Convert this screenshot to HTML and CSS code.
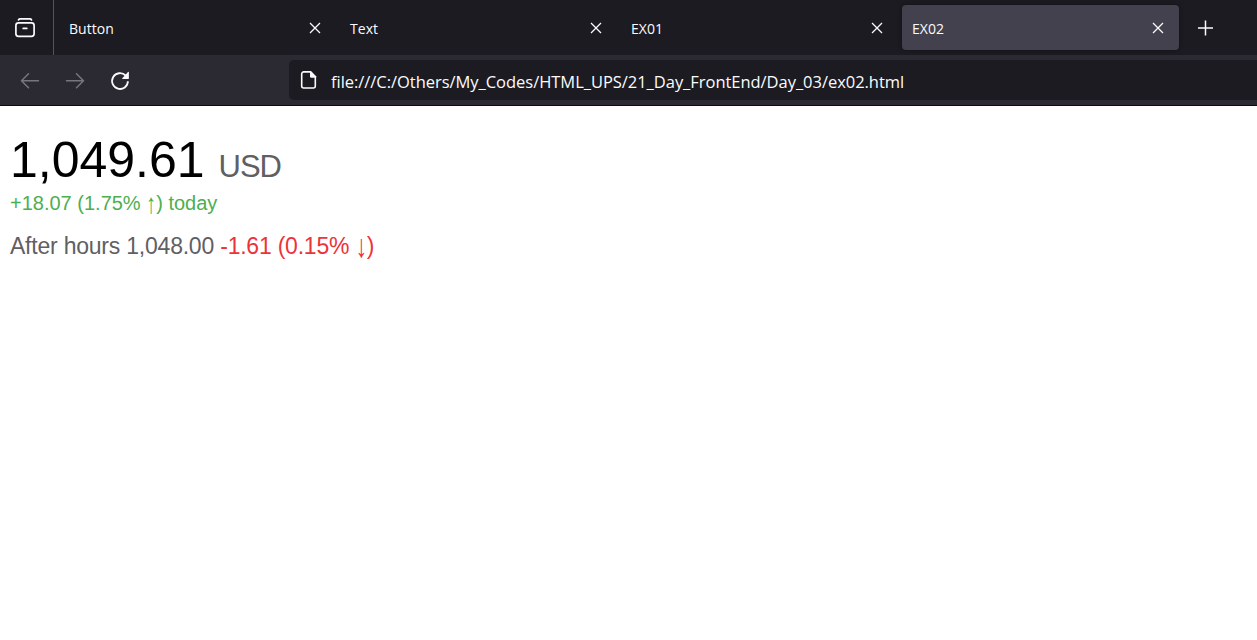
FILE: index.html
```html
<!DOCTYPE html>
<html lang="en">
<head>
<meta charset="utf-8">
<title>EX02</title>
<link rel="stylesheet" href="styles.css">
</head>
<body>
<header class="browser">
  <div class="tabs">
    <div class="archive">
      <svg width="22" height="22" viewBox="0 0 22 22" fill="none" stroke="#fbfbfe" stroke-width="1.7" stroke-linecap="round"><path d="M4.500 2.900Q5 1.900 6.200 1.900H15.800Q17 1.900 17.500 2.900"/><rect x="1.900" y="5.900" width="18.200" height="13.500" rx="2.600"/><path d="M9.200 11.400h3.600"/></svg>
    </div>
    <div class="tab"><span class="label">Button</span><svg class="close" viewBox="0 0 12 12"><path d="M1 1l10 10M11 1L1 11"/></svg></div>
    <div class="tab"><span class="label">Text</span><svg class="close" viewBox="0 0 12 12"><path d="M1 1l10 10M11 1L1 11"/></svg></div>
    <div class="tab"><span class="label">EX01</span><svg class="close" viewBox="0 0 12 12"><path d="M1 1l10 10M11 1L1 11"/></svg></div>
    <div class="tab active"><span class="label">EX02</span><svg class="close" viewBox="0 0 12 12"><path d="M1 1l10 10M11 1L1 11"/></svg></div>
    <svg class="plus" width="16" height="16" viewBox="0 0 16 16"><path d="M8.500 .5v15M1 8h15"/></svg>
  </div>
  <div class="toolbar">
    <div class="nav">
      <svg class="dim" width="20" height="20" viewBox="0 0 20 20"><path d="M18.500 9.700H1.500M8.500 2.700L1.500 9.700l7 7"/></svg>
      <svg class="dim" width="20" height="20" viewBox="0 0 20 20"><path d="M1.500 9.700h17M11.500 2.700l7 7-7 7"/></svg>
      <svg class="reload" width="20" height="20" viewBox="0 0 20 20"><path d="M17.900 10.200A7.900 7.900 0 1 1 15.600 4.500"/><path class="solid" d="M18.900 1.200v6.100q0 .6-.6.6h-5.700q-.9 0-.3-.7l5.700-6.300q.9-.6.9.3z"/></svg>
    </div>
    <div class="address">
      <svg width="17" height="20" viewBox="0 0 17 20"><path d="M10.300 1.900H3.700a2 2 0 0 0-2 2V16a2 2 0 0 0 2 2h9.600a2 2 0 0 0 2-2V7" fill="none" stroke="#fbfbfe" stroke-width="1.600"/><path d="M10 1.100h1l5.100 5.200v1.400h-4.600Q10 7.700 10 6.200z" fill="#fbfbfe"/></svg>
      <span class="url">file:///C:/Others/My_Codes/HTML_UPS/21_Day_FrontEnd/Day_03/ex02.html</span>
    </div>
  </div>
</header>
<main class="quote">
  <p class="price"><span class="amount">1,049.61</span> <span class="currency">USD</span></p>
  <p class="change">+18.07 (1.75% <span class="arrow">↑</span>) today</p>
  <p class="after">After hours 1,048.00 <span class="loss">-1.61 (0.15% <span class="arrow">↓</span>)</span></p>
</main>
</body>
</html>
```
FILE: styles.css
```css
* { box-sizing: border-box; }
body { margin: 0; background: #fff; font-family: "Liberation Sans", Arial, sans-serif; overflow: hidden; }
.browser { height: 106px; background: #2b2a33; border-bottom: 1px solid #0c0c0d; color: #fbfbfe; font-family: "Open Sans", "Noto Sans", sans-serif; }
.tabs { display: flex; align-items: center; height: 55px; background: #1c1b22; }
.archive { display: flex; align-items: center; width: 54px; height: 55px; padding-left: 14px; border-right: 1px solid #55545c; margin-right: 5px; }
.tab { display: flex; align-items: center; justify-content: space-between; width: 277px; height: 45px; padding: 0 15px 0 10px; margin-right: 4px; border-radius: 4px; }
.active { background: #42414d; box-shadow: 0 0 4px rgba(0, 0, 0, .4); }
.label { font-size: 14px; line-height: 20px; letter-spacing: .05px; padding-top: 2px; }
.close { width: 12px; height: 12px; fill: none; stroke: #fbfbfe; stroke-width: 1.25; }
.plus { margin-left: 14px; fill: none; stroke: #fbfbfe; stroke-width: 1.5; }
.toolbar { display: flex; height: 50px; padding-top: 5px; }
.nav { display: flex; align-items: center; gap: 25px; width: 289px; height: 42px; padding-left: 20px; }
.dim { fill: none; stroke: #77767e; stroke-width: 1.5; stroke-linecap: round; stroke-linejoin: round; }
.reload { fill: none; stroke: #fbfbfe; stroke-width: 1.8; }
.solid { fill: #fbfbfe; stroke: none; }
.address { display: flex; align-items: center; gap: 14px; flex: 1; height: 40px; padding-left: 11px; background: #1c1b22; border-radius: 5px 0 0 5px; }
.url { font-size: 16.5px; line-height: 24px; padding-top: 4px; letter-spacing: -.035px; white-space: nowrap; }
.quote { padding: 26px 10px; }
.quote p { margin: 0; white-space: nowrap; }
.price { font-size: 50px; line-height: 56px; height: 59px; }
.currency { font-size: 31px; color: #5f6063; letter-spacing: -1px; }
.change { font-size: 20px; line-height: 24px; height: 24px; color: #4caf50; }
.quote .after { margin-top: 17px; font-size: 23px; line-height: 28px; letter-spacing: -.22px; color: #5f6063; }
.loss { color: #ee3338; }
.arrow { display: inline-block; line-height: 1; transform: scaleY(1.4); }
```
